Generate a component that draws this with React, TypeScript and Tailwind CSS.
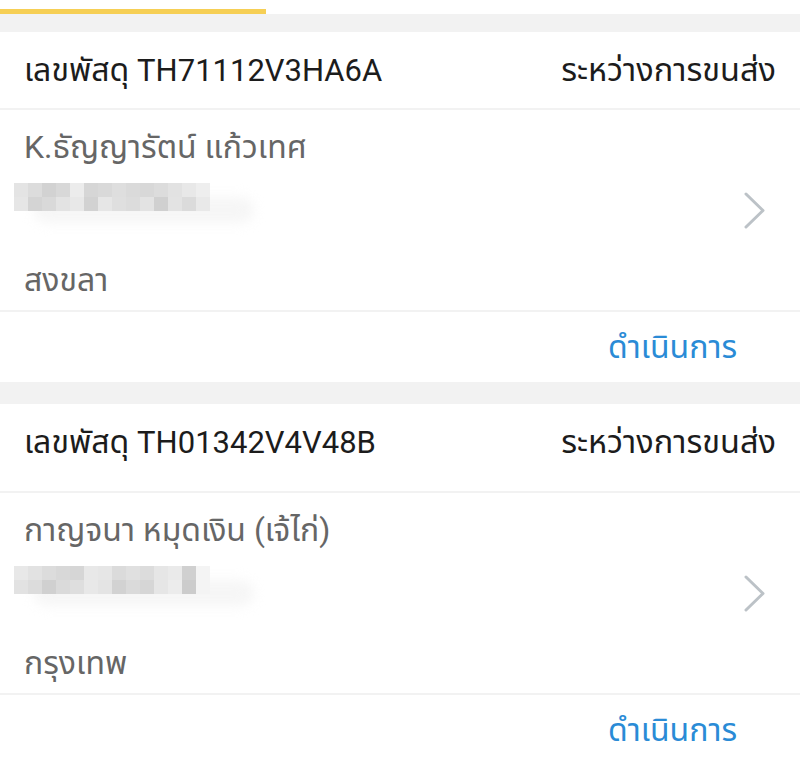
type Parcel = {
  id: string;
  name: string;
  city: string;
  headerH: string;
  blur: string[][];
};

const parcels: Parcel[] = [
  {
    id: "TH71112V3HA6A",
    name: "K.ธัญญารัตน์  แก้วเทศ",
    city: "สงขลา",
    headerH: "h-[78px]",
    blur: [
      ["#e4e4e4", "#dcdcdc", "#d2d2d2", "#d8d8d8", "#ececec", "#d6d6d6", "#d9d9d9", "#dedede", "#dadada", "#d8d8d8", "#dcdcdc", "#e2e2e2", "#e8e8e8", "#eeeeee"],
      ["#e6e6e6", "#d4d4d4", "#d9d9d9", "#e3e3e3", "#e8e8e8", "#d2d2d2", "#e6e6e6", "#dfdfdf", "#dcdcdc", "#e3e3e3", "#d0d0d0", "#e3e3e3", "#dbdbdb", "#e9e9e9"],
    ],
  },
  {
    id: "TH01342V4V48B",
    name: "กาญจนา หมุดเงิน (เจ้ไก่)",
    city: "กรุงเทพ",
    headerH: "h-[89px] pb-[11px]",
    blur: [
      ["#e8e8e8", "#e2e2e2", "#dcdcdc", "#d8d8d8", "#d6d6d6", "#e8e8e8", "#e6e6e6", "#dbdbdb", "#e0e0e0", "#dcdcdc", "#e6e6e6", "#eaeaea", "#d0d0d0", "#f4f4f4"],
      ["#e2e2e2", "#dcdcdc", "#d0d0d0", "#dadada", "#dedede", "#e8e8e8", "#e4e4e4", "#d2d2d2", "#dadada", "#d6d6d6", "#e6e6e6", "#ececec", "#cccccc", "#f4f4f4"],
    ],
  },
];

function Blurred({ rows }: { rows: string[][] }) {
  return (
    <div className="relative ml-[14px] w-[240px] h-[28px]">
      <div className="absolute left-[20px] top-[14px] w-[220px] h-[26px] rounded-full bg-[#f6f6f6] blur-[6px]" />
      <div className="relative flex flex-col blur-[0.6px]">
        {rows.map((row, i) => (
          <div key={i} className="flex">
            {row.map((c, j) => (
              <div key={j} className="w-[14px] h-[14px]" style={{ backgroundColor: c }} />
            ))}
          </div>
        ))}
      </div>
    </div>
  );
}

function Chevron() {
  return (
    <svg
      className="absolute left-[743px] top-[81px]"
      width="24"
      height="39"
      viewBox="0 0 24 39"
      fill="none"
      stroke="#bcc2c7"
      strokeWidth="3"
      strokeLinecap="round"
      strokeLinejoin="round"
    >
      <polyline points="3,3 20,19.5 3,36" />
    </svg>
  );
}

function ParcelCard({ p }: { p: Parcel }) {
  return (
    <div className="bg-white">
      <div className={`flex items-center justify-between px-6 border-b-2 border-[#f2f2f2] text-[#1c1c1c] ${p.headerH}`}>
        <span className="text-[32px] leading-[40px]">
          เลขพัสดุ <span className="text-[31px]">{p.id}</span>
        </span>
        <span className="text-[32.5px] leading-[40px]">ระหว่างการขนส่ง</span>
      </div>

      <div className="relative h-[202px] border-b-2 border-[#f2f2f2]">
        <div className="px-6 pt-[17px] text-[32px] leading-[40px] text-[#666666]">{p.name}</div>
        <div className="mt-[16px]">
          <Blurred rows={p.blur} />
        </div>
        <div className="px-6 mt-[49px] text-[32px] leading-[40px] text-[#666666]">{p.city}</div>
        <Chevron />
      </div>

      <div className="flex items-center justify-end pr-[63px] h-[70px]">
        <span className="text-[32px] leading-[40px] text-[#2a8bd6]">ดำเนินการ</span>
      </div>
    </div>
  );
}

export default function App() {
  return (
    <div
      className="w-[800px] h-[762px] overflow-hidden bg-[#f2f2f2]"
      style={{ fontFamily: "Roboto, 'Noto Sans', 'Noto Sans Thai', sans-serif" }}
    >
      <div className="h-[14px] pt-[9px] bg-white">
        <div className="h-[5px] w-[266px] bg-[#f6cf55]" />
      </div>
      <div className="h-[18px]" />
      <div className="flex flex-col gap-[22px]">
        {parcels.map((p) => (
          <ParcelCard key={p.id} p={p} />
        ))}
      </div>
    </div>
  );
}
